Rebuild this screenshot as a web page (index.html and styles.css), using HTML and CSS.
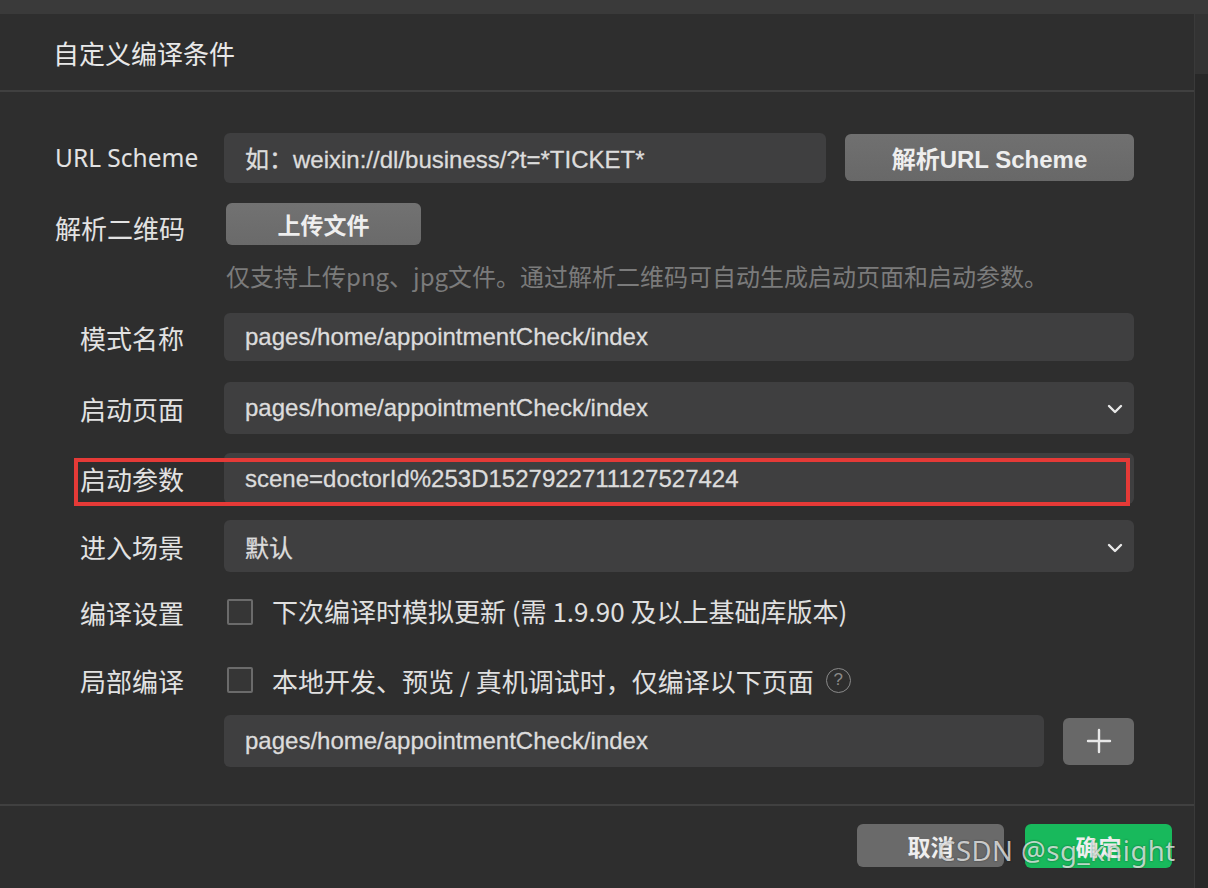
FILE: index.html
```html
<!DOCTYPE html>
<html lang="zh-CN">
<head>
<meta charset="utf-8">
<title>自定义编译条件</title>
<link rel="stylesheet" href="styles.css">
</head>
<body>
<div class="screen">
  <div class="topbar"></div>
  <div class="main">
    <div class="dialog">
      <div class="header"><span class="title">自定义编译条件</span></div>
      <div class="body">
        <div class="row row-url">
          <div class="label">URL Scheme</div>
          <div class="content split">
            <div class="input grow">如：weixin://dl/business/?t=*TICKET*</div>
            <div class="btn btn-parse">解析URL Scheme</div>
          </div>
        </div>
        <div class="row row-qr">
          <div class="label">解析二维码</div>
          <div class="content">
            <div class="btn btn-upload">上传文件</div>
          </div>
        </div>
        <div class="row row-hint">
          <div class="label"></div>
          <div class="content hint">仅支持上传png、jpg文件。通过解析二维码可自动生成启动页面和启动参数。</div>
        </div>
        <div class="row row-field r-mode">
          <div class="label indent">模式名称</div>
          <div class="content"><div class="input grow">pages/home/appointmentCheck/index</div></div>
        </div>
        <div class="row row-field r-page">
          <div class="label indent">启动页面</div>
          <div class="content"><div class="input grow select">pages/home/appointmentCheck/index
            <svg class="chev" width="16" height="10" viewBox="0 0 16 10"><polyline points="2,2 8,8 14,2" fill="none" stroke="#e8e8e8" stroke-width="2.4" stroke-linecap="round" stroke-linejoin="round"/></svg></div></div>
        </div>
        <div class="row row-field r-param">
          <div class="label indent">启动参数</div>
          <div class="content"><div class="input grow">scene=doctorId%253D1527922711127527424</div></div>
          <div class="highlight"></div>
        </div>
        <div class="row row-field r-scene">
          <div class="label indent">进入场景</div>
          <div class="content"><div class="input grow select">默认
            <svg class="chev" width="16" height="10" viewBox="0 0 16 10"><polyline points="2,2 8,8 14,2" fill="none" stroke="#e8e8e8" stroke-width="2.4" stroke-linecap="round" stroke-linejoin="round"/></svg></div></div>
        </div>
        <div class="row row-check r-compile">
          <div class="label indent">编译设置</div>
          <div class="content check">
            <span class="box"></span>
            <span class="check-text">下次编译时模拟更新 (需 1.9.90 及以上基础库版本)</span>
          </div>
        </div>
        <div class="row row-check r-partial">
          <div class="label indent">局部编译</div>
          <div class="content check">
            <span class="box"></span>
            <span class="check-text">本地开发、预览 / 真机调试时，仅编译以下页面</span>
            <span class="help">?</span>
          </div>
        </div>
        <div class="row row-pages">
          <div class="label"></div>
          <div class="content split">
            <div class="input grow">pages/home/appointmentCheck/index</div>
            <div class="btn btn-plus">
              <svg width="26" height="26" viewBox="0 0 26 26"><path d="M13 2V24M2 13H24" stroke="#e8e8e8" stroke-width="2.4" stroke-linecap="round"/></svg>
            </div>
          </div>
        </div>
      </div>
      <div class="footer">
        <div class="btn btn-cancel">取消</div>
        <div class="btn btn-ok">确定</div>
        <div class="watermark">CSDN @sg_knight</div>
      </div>
    </div>
    <div class="side">
      <div class="side-top"></div>
    </div>
  </div>
</div>
</body>
</html>
```
FILE: styles.css
```css
* { box-sizing: border-box; }
html, body { margin: 0; padding: 0; }
body {
  background: #2a2a2a;
  font-family: "Noto Sans CJK SC", "Noto Sans", sans-serif;
  color: #e4e4e4;
}
.screen { width: 1208px; height: 888px; overflow: hidden; display: flex; flex-direction: column; }
.topbar { height: 14px; background: #3a3a3a; flex: none; }
.main { flex: 1; display: flex; }
.dialog {
  width: 1195px;
  background: #2e2e2e;
  display: flex;
  flex-direction: column;
  border-right: 1px solid #3a3a3a;
}
.side { flex: 1; background: #282828; }
.side-top { height: 60px; background: #333333; }

.header {
  height: 78px;
  padding-left: 55px;
  display: flex;
  align-items: center;
  border-bottom: 2px solid #404040;
}
.title { font-size: 26px; color: #e8e8e8; margin-left: -2px; }

.body {
  padding: 40px 60px 0 55px;
  display: flex;
  flex-direction: column;
  flex: none;
  height: 712px;
}
.row { display: flex; align-items: center; position: relative; }
.label { width: 169px; flex: none; font-size: 26px; color: #e2e2e2; white-space: nowrap; }
.label.indent { padding-left: 25px; }
.row-url .label { font-family: "Noto Sans", "Noto Sans CJK SC", sans-serif; font-size: 24.5px; }
.content { flex: 1; display: flex; align-items: center; }
.split { gap: 19px; }

.input {
  height: 50px;
  background: #3f3f40;
  border-radius: 6px;
  padding-left: 21px;
  display: flex;
  align-items: center;
  font-family: "Liberation Sans", "Noto Sans CJK SC", sans-serif;
  font-size: 24px;
  color: #dcdcdc;
  position: relative;
  -webkit-text-stroke: 0.3px #dcdcdc;
}
.grow { flex: 1; }
.select { justify-content: flex-start; }
.chev { position: absolute; right: 11px; top: 22px; }

.btn {
  border-radius: 6px;
  display: flex;
  align-items: center;
  justify-content: center;
  color: #eeeeee;
  font-weight: 700;
  flex: none;
}
.btn-parse {
  width: 289px; height: 47px;
  background: linear-gradient(#707070, #686868);
  font-family: "Liberation Sans", "Noto Sans CJK SC", sans-serif;
  font-size: 24px;
}
.btn-upload {
  margin-left: 2px;
  width: 195px; height: 42px;
  background: linear-gradient(#727272, #6a6a6a);
  font-size: 23px;
}
.btn-plus { width: 71px; height: 47px; background: #686868; }

.row-url { height: 51px; }
.row-qr { height: 42px; margin-top: 20px; }
.row-qr .label { padding-top: 6px; }
.row-hint { height: 40px; margin-top: 10px; }
.hint { padding-left: 2px; font-size: 24px; color: #7b7b7b; white-space: nowrap; }
.r-mode { margin-top: 18px; height: 48px; }
.r-mode .input { height: 48px; }
.r-page { margin-top: 21px; height: 52px; }
.r-page .input { height: 52px; }
.r-param { margin-top: 19px; height: 51px; }
.r-param .input { height: 51px; }
.r-scene { margin-top: 16px; height: 52px; }
.r-scene .input { height: 52px; }
.r-scene .chev { top: 23px; }
.row-check { height: 46px; }
.r-compile { margin-top: 17px; }
.r-compile .check-text { margin-top: -4px; }
.r-partial { margin-top: 22px; }
.row-pages { margin-top: 12px; height: 52px; }
.row-pages .input { height: 52px; }

.check { padding-left: 3px; }
.box {
  width: 26px; height: 26px;
  border: 2px solid #6b6b6b;
  background: #363636;
  border-radius: 2px;
  flex: none;
}
.check-text { margin-left: 19px; font-size: 26px; color: #e0e0e0; white-space: nowrap; }
.help {
  margin-left: 12px;
  width: 25px; height: 25px;
  border: 1.5px solid #8a8a8a;
  border-radius: 50%;
  color: #8a8a8a;
  font-size: 17px;
  display: flex; align-items: center; justify-content: center;
  font-family: "Liberation Sans", sans-serif;
}

.highlight {
  position: absolute;
  left: 19px;
  top: 5px;
  width: 1056px;
  height: 48px;
  border: 4px solid #e53a37;
  pointer-events: none;
}

.footer {
  flex: 1;
  border-top: 2px solid #404040;
  display: flex;
  justify-content: flex-end;
  align-items: flex-start;
  padding: 18px 22px 0 0;
  gap: 21px;
  position: relative;
}
.btn-cancel { width: 147px; height: 43px; background: #6a6a6a; font-size: 23px; }
.btn-ok { width: 147px; height: 44px; background: #18b95c; font-size: 23px; }
.watermark {
  position: absolute;
  left: 938px;
  top: 26px;
  font-family: "Noto Sans", "Liberation Sans", sans-serif;
  font-size: 27.5px;
  color: rgba(255, 255, 255, 0.72);
  text-shadow: 0 0 2px rgba(0,0,0,0.5);
  white-space: nowrap;
  letter-spacing: 0.5px;
}
```
